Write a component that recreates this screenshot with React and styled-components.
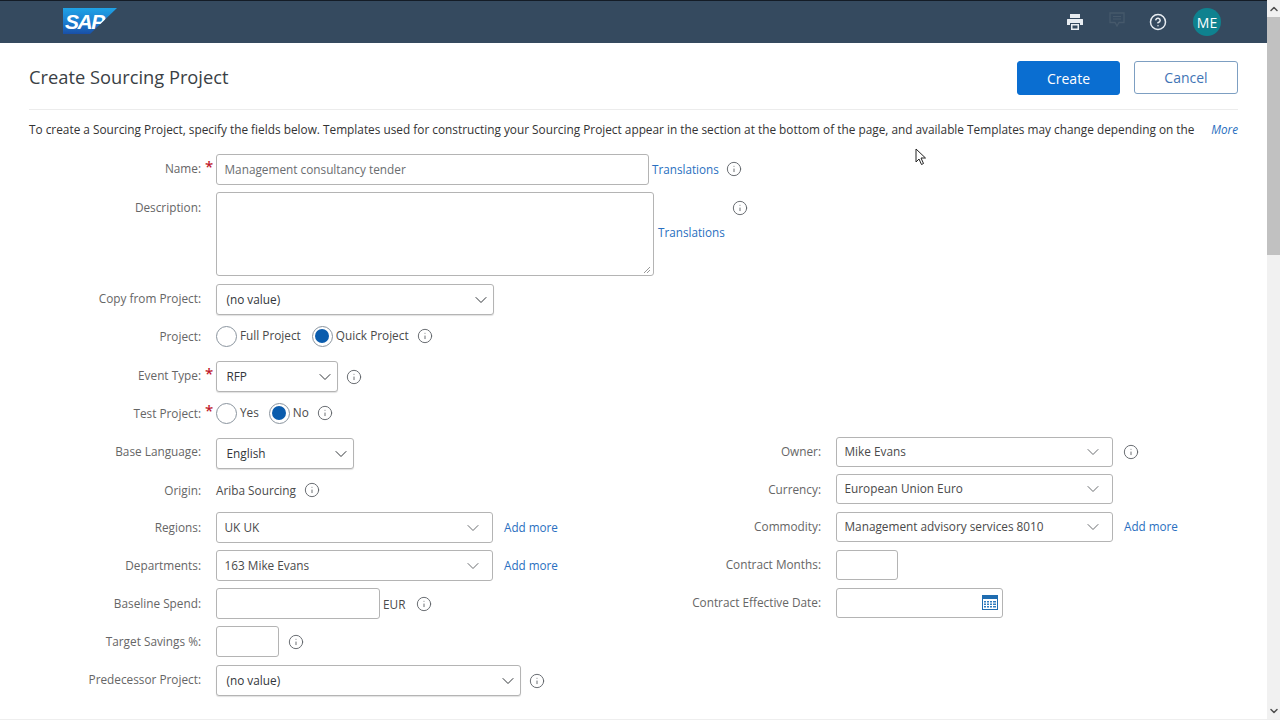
import React from "react";
import styled, { createGlobalStyle } from "styled-components";
import { ChevronDown, ChevronUp, Info, CircleHelp } from "lucide-react";

const GlobalStyle = createGlobalStyle`
  html, body {
    margin: 0;
    padding: 0;
    height: 100%;
    overflow: hidden;
    background: #fff;
    font-family: "Open Sans", "Liberation Sans", sans-serif;
    font-size: 11.8px;
    color: #4a4a4a;
  }
  * {
    box-sizing: border-box;
  }
`;

const Shell = styled.div`
  display: flex;
  width: 1280px;
  height: 720px;
  overflow: hidden;
  position: relative;
  border-bottom: 1px solid #eee;
`;

const Page = styled.div`
  flex: 1;
  min-width: 0;
`;

const Header = styled.header`
  height: 43px;
  background: #354a5f;
  border-top: 1px solid #141c26;
  display: flex;
  align-items: center;
  padding: 0 46px 0 63px;
`;

const Logo = styled.div`
  width: 54px;
  height: 26px;
  margin-top: -2px;
  padding: 3px 0 0 2px;
  background: linear-gradient(180deg, #1fa3e6 0%, #1b78cc 60%, #1a4fa6 100%);
  clip-path: polygon(0 0, 100% 0, 50% 100%, 0 100%);
  color: #fff;
  font: italic 700 21px/22px "Liberation Sans", sans-serif;
  letter-spacing: -1.5px;
`;

const HeaderIcons = styled.div`
  margin-left: auto;
  display: flex;
  align-items: center;
  color: #e8edf2;
`;

const IconSlot = styled.span`
  display: flex;
  margin: ${(p) => p.$mt || 0}px ${(p) => p.$mr}px 0 0;
`;

const Avatar = styled.span`
  width: 28px;
  height: 28px;
  border-radius: 50%;
  background: #0f828f;
  color: #fff;
  font-size: 14px;
  display: flex;
  align-items: center;
  justify-content: center;
`;

const Main = styled.main`
  padding: 0 29px;
`;

const TitleBar = styled.div`
  height: 67px;
  display: flex;
  align-items: flex-start;
  justify-content: space-between;
  border-bottom: 1px solid #ececec;
`;

const Title = styled.h1`
  margin: 21px 0 0;
  font-size: 18.3px;
  line-height: 26px;
  font-weight: 400;
  color: #3a3f45;
`;

const Actions = styled.div`
  display: flex;
  gap: 14px;
  margin-top: 18px;
`;

const Button = styled.button`
  width: ${(p) => (p.$primary ? 103 : 104)}px;
  height: ${(p) => (p.$primary ? 34 : 33)}px;
  border-radius: 3px;
  font-family: inherit;
  font-size: 14px;
  border: 1px solid ${(p) => (p.$primary ? "#0a6ed1" : "#7d9fc2")};
  background: ${(p) => (p.$primary ? "#0a6ed1" : "#fff")};
  color: ${(p) => (p.$primary ? "#fff" : "#3f74b5")};
`;

const Intro = styled.div`
  display: flex;
  justify-content: space-between;
  margin: 9px 0 15px;
  line-height: 20px;
  font-size: 11.84px;
  color: #333;
  white-space: nowrap;
`;

const Link = styled.a`
  color: #2a6fc0;
  font-size: 11.7px;
  white-space: nowrap;
  margin-left: ${(p) => p.$ml || 0}px;
  margin-top: ${(p) => p.$mt ?? -2}px;
  font-style: ${(p) => (p.$italic ? "italic" : "normal")};
`;

const Row = styled.div`
  display: flex;
  align-items: ${(p) => (p.$top ? "flex-start" : "center")};
  min-height: ${(p) => p.$h || 31}px;
  margin-top: ${(p) => p.$mt || 0}px;
`;

const Label = styled.label`
  width: 172px;
  flex: none;
  display: flex;
  justify-content: flex-end;
  color: #666;
  white-space: nowrap;
  padding-top: ${(p) => p.$pt || 0}px;
  margin-top: ${(p) => p.$mt ?? -1}px;
`;

const Star = styled.span`
  width: 15px;
  flex: none;
  padding-left: 4px;
  margin-top: -7px;
  color: #c0182c;
  font-size: 15px;
  line-height: 14px;
  font-weight: 600;
`;

const Input = styled.div`
  width: ${(p) => p.$w}px;
  height: ${(p) => p.$h || 31}px;
  flex: none;
  display: flex;
  align-items: center;
  justify-content: space-between;
  padding: 0 ${(p) => p.$pr || 8}px 2px 7.5px;
  background: #fff;
  border: 1px solid #b4b4b4;
  border-radius: 3px;
  color: ${(p) => (p.$muted ? "#6a6d70" : "#4a4a4a")};
`;

const Select = styled(Input)`
  padding: 0 2px 2px 9.5px;
  color: #32363a;
  box-shadow: 0 1px 1px rgba(0, 0, 0, 0.12);
`;

const Resize = styled.svg`
  align-self: flex-end;
  margin: 0 -6px -1px 0;
`;

const TextArea = styled(Input)`
  justify-content: flex-end;
`;

const RadioGroup = styled.div`
  display: flex;
  align-items: center;
  color: #4a4a4a;
`;

const RadioCircle = styled.span`
  width: 21px;
  height: 21px;
  margin-right: 3px;
  flex: none;
  border-radius: 50%;
  border: 1px solid #8a949e;
  background: #fff;
  display: flex;
  align-items: center;
  justify-content: center;

  &::after {
    content: "";
    width: 14px;
    height: 14px;
    border-radius: 50%;
    background: ${(p) => (p.$on ? "#0a5cad" : "transparent")};
  }
`;

const RadioText = styled.span`
  margin: -2px ${(p) => p.$mr || 11}px 0 0;
`;

const InfoIcon = styled(Info).attrs({ size: 16, strokeWidth: 1.4 })`
  flex: none;
  color: #5f6368;
  margin-left: ${(p) => p.$ml || 0}px;
  margin-top: ${(p) => p.$mt || 0}px;
`;

const SideInfo = styled(InfoIcon)`
  align-self: flex-start;
  margin-top: 8px;
`;

const Arrow = styled(ChevronDown).attrs({ size: 20, strokeWidth: 1.2 })`
  flex: none;
  margin-bottom: -2px;
  color: ${(p) => p.$color || "#32363a"};
`;

const Plain = styled.span`
  color: #4a4a4a;
  margin-left: ${(p) => p.$ml || 0}px;
`;

const Columns = styled.div`
  display: grid;
  grid-template-columns: 620px 1fr;
  margin-top: 12px;
`;

const Column = styled.div`
  display: flex;
  flex-direction: column;
`;

const Scrollbar = styled.div`
  width: 13px;
  flex: none;
  background: #f1f1f1;
  display: flex;
  flex-direction: column;
  align-items: center;
  color: #505050;
`;

const ScrollCap = styled.div`
  height: 17px;
  flex: none;
  display: flex;
  align-items: center;
  justify-content: center;
`;

const Thumb = styled.div`
  width: 100%;
  height: 238px;
  background: #c1c1c1;
`;

const ScrollGap = styled.div`
  flex: 1;
`;

const Cursor = styled.svg`
  position: absolute;
  left: 915px;
  top: 148px;
`;

const PrinterIcon = () => (
  <svg width="18" height="18" viewBox="0 0 18 18" fill="currentColor">
    <path d="M4 1h10v4H4z" />
    <path d="M1.500 6h15a.5.5 0 0 1 .5.5V12h-3v-2H4v2H1V6.500a.5.5 0 0 1 .5-.5z" />
    <path d="M5 11h8v6H5zm1.500 1.500v3h5v-3z" fillRule="evenodd" />
  </svg>
);

const ChatIcon = () => (
  <svg width="16" height="16" viewBox="0 0 16 16" fill="none" stroke="#46596b" strokeWidth="1.3">
    <path d="M1 1h14v9.500H10L8 14l-2-3.500H1z" />
    <path d="M4 4.500h8M4 7h8" strokeWidth="1" />
  </svg>
);

const CalendarIcon = () => (
  <svg width="16" height="15" viewBox="0 0 16 15">
    <rect x="0.500" y="0.500" width="15" height="14" fill="#fff" stroke="#1f6cb0" />
    <rect x="0" y="0" width="16" height="4" fill="#1f6cb0" />
    <path d="M2 6h2v1.500H2zM5 6h2v1.500H5zM8 6h2v1.500H8zM11 6h3v1.500h-3zM2 8.500h2V10H2zM5 8.500h2V10H5zM8 8.500h2V10H8zM11 8.500h3V10h-3zM2 11h2v1.500H2zM5 11h2v1.500H5zM8 11h2v1.500H8zM11 11h3v1.500h-3z" fill="#2f7cbf" />
  </svg>
);

const App = () => (
  <>
    <GlobalStyle />
    <Shell>
      <Page>
        <Header>
          <Logo>SAP</Logo>
          <HeaderIcons>
            <IconSlot $mr={25}>
              <PrinterIcon />
            </IconSlot>
            <IconSlot $mr={24} $mt={-4}>
              <ChatIcon />
            </IconSlot>
            <IconSlot $mr={26}>
              <CircleHelp size={18} strokeWidth={2} />
            </IconSlot>
            <Avatar>ME</Avatar>
          </HeaderIcons>
        </Header>
        <Main>
          <TitleBar>
            <Title>Create Sourcing Project</Title>
            <Actions>
              <Button $primary>Create</Button>
              <Button>Cancel</Button>
            </Actions>
          </TitleBar>
          <Intro>
            <span>
              To create a Sourcing Project, specify the fields below. Templates used for constructing your Sourcing
              Project appear in the section at the bottom of the page, and available Templates may change depending on
              the
            </span>
            <Link $italic $mt={0}>More</Link>
          </Intro>

          <Row>
            <Label $mt={-3}>Name:</Label>
            <Star>*</Star>
            <Input $w={433} $muted>Management consultancy tender</Input>
            <Link $ml={3}>Translations</Link>
            <InfoIcon $ml={7} $mt={-2} />
          </Row>
          <Row $top $mt={7}>
            <Label $pt={8}>Description:</Label>
            <Star />
            <TextArea $w={438} $h={84}>
              <Resize width="8" height="8" viewBox="0 0 8 8" stroke="#999" fill="none">
                <path d="M1 7l6-6M4 7l3-3" />
              </Resize>
            </TextArea>
            <Row $h={84}>
              <Link $ml={4} $mt={-4}>Translations</Link>
            </Row>
            <SideInfo $ml={7} />
          </Row>
          <Row $mt={8}>
            <Label $mt={-3}>Copy from Project:</Label>
            <Star />
            <Select $w={278}>
              (no value)
              <Arrow />
            </Select>
          </Row>
          <Row $mt={9} $h={24}>
            <Label>Project:</Label>
            <Star />
            <RadioGroup>
              <RadioCircle />
              <RadioText>Full Project</RadioText>
              <RadioCircle $on />
              <RadioText $mr={8}>Quick Project</RadioText>
              <InfoIcon />
            </RadioGroup>
          </Row>
          <Row $mt={13}>
            <Label $mt={-3}>Event Type:</Label>
            <Star>*</Star>
            <Select $w={122}>
              RFP
              <Arrow />
            </Select>
            <InfoIcon $ml={8} />
          </Row>
          <Row $mt={9} $h={24}>
            <Label>Test Project:</Label>
            <Star>*</Star>
            <RadioGroup>
              <RadioCircle />
              <RadioText $mr={10}>Yes</RadioText>
              <RadioCircle $on />
              <RadioText $mr={8}>No</RadioText>
              <InfoIcon />
            </RadioGroup>
          </Row>

          <Columns>
            <Column>
              <Row $mt={1}>
                <Label $mt={-5}>Base Language:</Label>
                <Star />
                <Select $w={138}>
                  English
                  <Arrow />
                </Select>
              </Row>
              <Row $mt={10} $h={22}>
                <Label>Origin:</Label>
                <Star />
                <Plain>Ariba Sourcing</Plain>
                <InfoIcon $ml={8} />
              </Row>
              <Row $mt={11}>
                <Label>Regions:</Label>
                <Star />
                <Input $w={277} $pr={9}>
                  UK UK
                  <Arrow $color="#6a6d70" />
                </Input>
                <Link $ml={11}>Add more</Link>
              </Row>
              <Row $mt={7}>
                <Label>Departments:</Label>
                <Star />
                <Input $w={277} $pr={9}>
                  163 Mike Evans
                  <Arrow $color="#6a6d70" />
                </Input>
                <Link $ml={11}>Add more</Link>
              </Row>
              <Row $mt={7}>
                <Label>Baseline Spend:</Label>
                <Star />
                <Input $w={164} />
                <Plain $ml={3}>EUR</Plain>
                <InfoIcon $ml={11} />
              </Row>
              <Row $mt={7}>
                <Label>Target Savings %:</Label>
                <Star />
                <Input $w={63} />
                <InfoIcon $ml={9} />
              </Row>
              <Row $mt={8}>
                <Label $mt={-3}>Predecessor Project:</Label>
                <Star />
                <Select $w={305}>
                  (no value)
                  <Arrow />
                </Select>
                <InfoIcon $ml={8} />
              </Row>
            </Column>
            <Column>
              <Row $h={30}>
                <Label $mt={-3}>Owner:</Label>
                <Star />
                <Input $w={277} $h={30} $pr={9}>
                  Mike Evans
                  <Arrow $color="#6a6d70" />
                </Input>
                <InfoIcon $ml={10} />
              </Row>
              <Row $mt={7} $h={30}>
                <Label>Currency:</Label>
                <Star />
                <Input $w={277} $h={30} $pr={9}>
                  European Union Euro
                  <Arrow $color="#6a6d70" />
                </Input>
              </Row>
              <Row $mt={8} $h={30}>
                <Label $mt={-3}>Commodity:</Label>
                <Star />
                <Input $w={277} $h={30} $pr={9}>
                  Management advisory services 8010
                  <Arrow $color="#6a6d70" />
                </Input>
                <Link $ml={11}>Add more</Link>
              </Row>
              <Row $mt={8} $h={30}>
                <Label $mt={-3}>Contract Months:</Label>
                <Star />
                <Input $w={62} $h={30} />
              </Row>
              <Row $mt={8} $h={30}>
                <Label $mt={-3}>Contract Effective Date:</Label>
                <Star />
                <Input $w={167} $h={30} $pr={4}>
                  <span />
                  <CalendarIcon />
                </Input>
              </Row>
            </Column>
          </Columns>
        </Main>
      </Page>
      <Scrollbar>
        <ScrollCap>
          <ChevronUp size={12} strokeWidth={3} />
        </ScrollCap>
        <Thumb />
        <ScrollGap />
        <ScrollCap>
          <ChevronDown size={12} strokeWidth={3} />
        </ScrollCap>
      </Scrollbar>
      <Cursor width="12" height="18" viewBox="0 0 12 18">
        <path d="M1 1v13l3-3 2.500 5.500 2-1L6 10h4.500z" fill="#fff" stroke="#222" strokeWidth="1" />
      </Cursor>
    </Shell>
  </>
);

export default App;
